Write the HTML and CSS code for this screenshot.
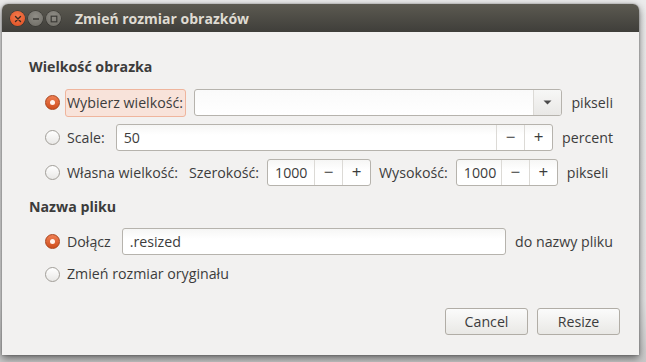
FILE: index.html
```html
<!DOCTYPE html>
<html lang="pl">
<head>
<meta charset="utf-8">
<title>Zmień rozmiar obrazków</title>
<link rel="stylesheet" href="styles.css">
</head>
<body>
<div class="desktop">
  <div class="window">
    <div class="titlebar">
      <div class="wbtns">
        <span class="wbtn close"><svg width="8" height="8" viewBox="0 0 8 8"><path d="M1.5 1.5L6.5 6.5M6.5 1.5L1.5 6.5" stroke="#3a2a22" stroke-width="1.4" stroke-linecap="round"/></svg></span>
        <span class="wbtn"><svg width="8" height="8" viewBox="0 0 8 8"><path d="M1 4H7" stroke="#3b3a36" stroke-width="1.4"/></svg></span>
        <span class="wbtn"><svg width="8" height="8" viewBox="0 0 8 8"><rect x="1.2" y="1.2" width="5.6" height="5.6" fill="none" stroke="#3b3a36" stroke-width="1.2"/></svg></span>
      </div>
      <div class="wtitle">Zmień rozmiar obrazków</div>
    </div>
    <div class="content">
      <div class="section-title">Wielkość obrazka</div>
      <div class="row r35">
        <span class="radio on"></span>
        <span class="rlabel focus">Wybierz wielkość:</span>
        <div class="combo">
          <div class="combo-field"></div>
          <div class="combo-btn"><svg width="9" height="5" viewBox="0 0 9 5"><path d="M0.5 0.5H8.5L4.5 4.5Z" fill="#4a4a4a"/></svg></div>
        </div>
        <span class="unit">pikseli</span>
      </div>
      <div class="row r35">
        <span class="radio"></span>
        <span class="rlabel">Scale:</span>
        <div class="spin grow">
          <div class="spin-field">50</div>
          <div class="spin-btn">−</div>
          <div class="spin-btn">+</div>
        </div>
        <span class="unit">percent</span>
      </div>
      <div class="row r35">
        <span class="radio"></span>
        <span class="rlabel">Własna wielkość:</span>
        <span class="plain">Szerokość:</span>
        <div class="spin w104">
          <div class="spin-field">1000</div>
          <div class="spin-btn">−</div>
          <div class="spin-btn">+</div>
        </div>
        <span class="plain">Wysokość:</span>
        <div class="spin w102">
          <div class="spin-field">1000</div>
          <div class="spin-btn">−</div>
          <div class="spin-btn">+</div>
        </div>
        <span class="unit">pikseli</span>
      </div>
      <div class="section-title s2">Nazwa pliku</div>
      <div class="row r35">
        <span class="radio on"></span>
        <span class="rlabel">Dołącz</span>
        <div class="entry grow">.resized</div>
        <span class="unit">do nazwy pliku</span>
      </div>
      <div class="row r28">
        <span class="radio"></span>
        <span class="rlabel">Zmień rozmiar oryginału</span>
      </div>
      <div class="actions">
        <button class="btn">Cancel</button>
        <button class="btn">Resize</button>
      </div>
    </div>
  </div>
</div>
</body>
</html>
```
FILE: styles.css
```css
* { box-sizing: border-box; }
html, body { margin: 0; padding: 0; }
body {
  width: 646px;
  height: 362px;
  overflow: hidden;
  background: linear-gradient(#ececec 0, #e4e4e4 300px, #c9c9c9 362px);
  font-family: "Open Sans", "DejaVu Sans", sans-serif;
  font-size: 14.2px;
  color: #3c3c3c;
}
.desktop {
  padding: 4px 7px 0 2px;
}
.window {
  width: 637px;
  height: 351px;
  background: #f2f1f0;
  border-radius: 6px 6px 0 0;
  box-shadow: 0 3px 9px rgba(0,0,0,0.55), 0 0 2px rgba(0,0,0,0.35);
  overflow: hidden;
}
.titlebar {
  height: 28px;
  background: linear-gradient(#5c5a51, #3f3e3a);
  display: flex;
  align-items: center;
}
.wbtns {
  display: flex;
  gap: 3px;
  padding-left: 8px;
  margin-top: 1px;
}
.wbtn {
  width: 15px;
  height: 15px;
  border-radius: 50%;
  background: radial-gradient(circle at 50% 35%, #8f8d86, #6c6a63);
  box-shadow: 0 0 0 0.5px #34332f;
  display: flex;
  align-items: center;
  justify-content: center;
}
.wbtn.close {
  background: radial-gradient(circle at 50% 35%, #f47a4c, #dc4c20);
}
.wtitle {
  margin-left: 14px;
  color: #dfdbd2;
  font-weight: 700;
  font-size: 14px;
  margin-top: 1px;
}
.content {
  padding: 25px 26px 0 26px;
}
.section-title {
  font-weight: 700;
  font-size: 14.2px;
  height: 20px;
  line-height: 20px;
  padding-left: 1px;
  margin-bottom: 8px;
}
.section-title.s2 {
  margin-top: 7px;
  margin-bottom: 7px;
}
.row {
  display: flex;
  align-items: center;
  padding-left: 17px;
  gap: 8px;
}
.r35 { height: 35px; }
.r28 { height: 30px; }
.radio {
  width: 15px;
  height: 15px;
  border-radius: 50%;
  border: 1px solid #a19e98;
  background: linear-gradient(#ffffff, #e9e8e6);
  flex: none;
  margin-right: -3px;
  position: relative;
}
.radio.on {
  border-color: #a9431b;
  background: linear-gradient(#ef7f53, #cf4e1d);
}
.radio.on::after {
  content: "";
  position: absolute;
  left: 4px;
  top: 4px;
  width: 5px;
  height: 5px;
  border-radius: 50%;
  background: #fff4ee;
}
.rlabel {
  border: 1px solid transparent;
  border-radius: 3px;
  padding: 0 2px 0 1px;
  height: 28px;
  line-height: 26px;
  white-space: nowrap;
}
.rlabel.focus {
  background: #f8e3da;
  border-color: #efb59d;
}
.plain { white-space: nowrap; }
.unit { white-space: nowrap; margin-left: 1px; }
.combo {
  flex: 1;
  height: 27px;
  display: flex;
  border: 1px solid #b6b3ad;
  border-radius: 3px;
  background: linear-gradient(#fafafa, #ffffff);
}
.combo-field { flex: 1; }
.combo-btn {
  width: 28px;
  border-left: 1px solid #dcdad6;
  background: linear-gradient(#f7f7f6, #e9e8e6);
  border-radius: 0 2px 2px 0;
  display: flex;
  align-items: center;
  justify-content: center;
}
.spin, .entry {
  height: 27px;
  border: 1px solid #b6b3ad;
  border-radius: 3px;
  background: linear-gradient(#f6f6f5, #ffffff 40%);
  display: flex;
}
.grow { flex: 1; }
.w104 { width: 104px; flex: none; }
.w102 { width: 102px; flex: none; }
.spin-field {
  flex: 1;
  padding-left: 7px;
  line-height: 25px;
}
.spin-btn {
  width: 28px;
  border-left: 1px solid #dcdad6;
  text-align: center;
  line-height: 24px;
  font-size: 17px;
  color: #3c3c3c;
}
.entry {
  padding-left: 7px;
  line-height: 25px;
}
.actions {
  display: flex;
  justify-content: flex-end;
  gap: 9px;
  margin-top: 19px;
  margin-right: -7px;
}
.btn {
  width: 83px;
  height: 27px;
  font-family: inherit;
  font-size: 14.2px;
  color: #3c3c3c;
  border: 1px solid #b1ada6;
  border-radius: 3px;
  background: linear-gradient(#fbfbfb, #e9e8e5);
  padding: 0;
}
```
